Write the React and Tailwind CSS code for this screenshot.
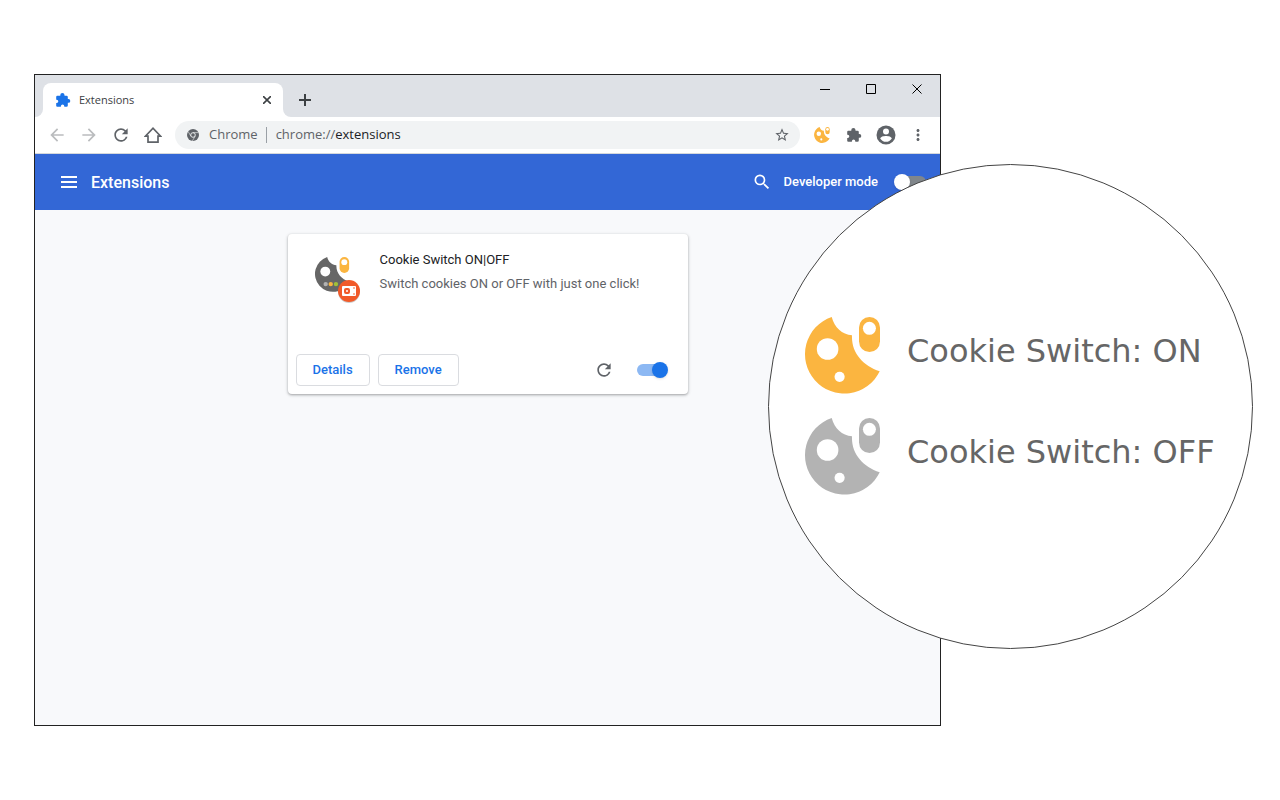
import {
  MdArrowBack,
  MdArrowForward,
  MdMoreVert,
  MdRefresh,
  MdSearch,
  MdStarBorder,
} from 'react-icons/md';

const COOKIE = 'M26.7 0A39.3 39.3 0 1 0 74.7 54.3C58 48.500 46.200 36 47 18.300C37 17.500 29.500 10.500 26.700 0Z';
const PILL = 'M64.500 0A10.500 10.500 0 0 1 75 10.500V24.500A10.500 10.500 0 0 1 54 24.500V10.500A10.500 10.500 0 0 1 64.500 0Z';

const CookieIcon = ({ className }) => (
  <svg className={className} viewBox="0 0 76 77" fill="currentColor" aria-hidden="true">
    <path d={COOKIE} />
    <path d={PILL} />
    <g fill="#fff">
      <circle cx="22.600" cy="32" r="10.800" />
      <circle cx="34.600" cy="59.800" r="5.100" />
      <circle cx="64.400" cy="11.300" r="6.500" />
    </g>
  </svg>
);

// Dark cookie with the "unpacked" badge in the corner
const ExtensionLogo = () => (
  <svg className="size-12 shrink-0" viewBox="0 0 48 48" aria-hidden="true">
    <g transform="translate(1 1) scale(.455)">
      <path d={COOKIE} fill="#666" />
      <path d={PILL} fill="#fbb540" />
      <circle cx="22.600" cy="32" r="10.800" fill="#fff" />
      <circle cx="64.400" cy="11.300" r="6.500" fill="#fff" />
      <circle cx="23.500" cy="59.500" r="4.800" fill="#b3b3b3" />
      <circle cx="34.600" cy="59.500" r="4.800" fill="#fbb540" />
      <circle cx="46" cy="59.500" r="4.800" fill="#a2c037" />
    </g>
    <circle cx="35" cy="36" r="11" fill="#000" opacity=".2" />
    <circle cx="35" cy="35" r="11" fill="#f15a29" />
    <rect x="28" y="30" width="14" height="10" rx="1" fill="#fff" />
    <rect x="30" y="32" width="6" height="6" rx="2" fill="#f15a29" />
    <circle cx="33" cy="35" r="1" fill="#fff" />
    <circle cx="40" cy="32" r=".8" fill="#f15a29" />
    <circle cx="40" cy="38" r=".8" fill="#f15a29" />
  </svg>
);

const PuzzleIcon = () => (
  <svg className="size-4" viewBox="0 0 16 16" fill="currentColor" aria-hidden="true">
    <path d="M2.300 3.800H5.300V3A2.100 2.100 0 0 1 9.500 3V3.800H11.500Q12.800 3.800 12.800 5V7H13.400A1.900 1.900 0 0 1 13.400 10.800H12.800V13.500Q12.800 14.800 11.500 14.800H9.300V14.200A1.700 1.700 0 0 0 5.900 14.200V14.800H2.300Q1.200 14.800 1.200 13.700V10.900H1.700A1.600 1.600 0 0 0 1.700 7.700H1.200V5Q1.200 3.800 2.300 3.800Z" />
  </svg>
);

const ProfileIcon = () => (
  <svg className="size-5" viewBox="0 0 20 20" aria-hidden="true">
    <circle cx="10" cy="10" r="9.500" fill="currentColor" />
    <circle cx="10" cy="6.400" r="3" fill="#fff" />
    <path d="M4.200 13.600C4.500 11.600 7.500 10.900 10 10.900S15.500 11.600 15.800 13.600A6.800 6.800 0 0 1 4.200 13.600Z" fill="#fff" />
  </svg>
);

const HomeIcon = () => (
  <svg className="size-[18px]" viewBox="0 0 18 18" fill="none" stroke="currentColor" strokeWidth="1.700" aria-hidden="true">
    <path d="M1.400 10.200H4V16.200H14V10.200H16.600L9 2.200Z" />
  </svg>
);

const ChromeIcon = () => (
  <svg className="size-3" viewBox="0 0 12 12" aria-hidden="true">
    <circle cx="6" cy="6" r="6" fill="#5f6368" />
    <circle cx="6" cy="6" r="2.300" fill="none" stroke="#f1f3f4" strokeWidth=".9" />
    <path d="M6 3.600H11.400M3.900 7.200L1.200 2.600M8.100 7.200L5.400 11.900" stroke="#f1f3f4" strokeWidth=".6" />
  </svg>
);

const WINDOW_BUTTONS = [
  { label: 'Minimize', d: 'M0 5.500H10' },
  { label: 'Maximize', d: 'M.5 .5H9.500V9.500H.5Z' },
  { label: 'Close', d: 'M.5 .5L9.500 9.500M9.500 .5L.5 9.500' },
];

const TabStrip = () => (
  <div className="flex h-[42px] items-end bg-[#dee1e6] pl-2">
    <div className="-ml-2 size-2 bg-white">
      <div className="size-2 rounded-br-lg bg-[#dee1e6]" />
    </div>
    <div className="flex h-[34px] w-60 items-center rounded-t-lg bg-white pl-3">
      <span className="text-[#1a73e8]"><PuzzleIcon /></span>
      <span className="ml-2 flex-1 font-['Open_Sans','Noto_Sans',sans-serif] text-[11px] text-[#3c4043]">Extensions</span>
      <button aria-label="Close tab" className="mr-2 grid size-4 place-items-center text-[#3c4043]">
        <svg className="size-2" viewBox="0 0 8 8" stroke="currentColor" strokeWidth="1.600">
          <path d="M0 0L8 8M8 0L0 8" />
        </svg>
      </button>
    </div>
    <div className="size-2 bg-white">
      <div className="size-2 rounded-bl-lg bg-[#dee1e6]" />
    </div>
    <button aria-label="New tab" className="grid h-[34px] w-7 place-items-center text-[#3c4043]">
      <svg className="size-3" viewBox="0 0 12 12" stroke="currentColor" strokeWidth="2">
        <path d="M6 0V12M0 6H12" />
      </svg>
    </button>
    <div className="ml-auto flex self-start">
      {WINDOW_BUTTONS.map((b) => (
        <button key={b.label} aria-label={b.label} className="grid h-7 w-[46px] place-items-center text-black">
          <svg className="size-[10px]" viewBox="0 0 10 10" fill="none" stroke="currentColor">
            <path d={b.d} />
          </svg>
        </button>
      ))}
    </div>
  </div>
);

const Toolbar = () => (
  <div className="flex h-[37px] items-center border-b border-[#d5d8dc] bg-white px-3 text-[#5f6368]">
    <div className="flex items-center gap-3">
      <button aria-label="Back" className="grid size-5 place-items-center text-[#babcbe]"><MdArrowBack className="size-5" /></button>
      <button aria-label="Forward" className="grid size-5 place-items-center text-[#babcbe]"><MdArrowForward className="size-5" /></button>
      <button aria-label="Reload" className="grid size-5 place-items-center"><MdRefresh className="size-5" /></button>
      <button aria-label="Home" className="grid size-5 place-items-center"><HomeIcon /></button>
    </div>
    <div className="ml-3 flex h-7 flex-1 items-center rounded-full bg-[#f1f3f4] pr-[10px] pl-3 font-['Open_Sans','Noto_Sans',sans-serif] text-[13px]">
      <ChromeIcon />
      <span className="ml-[10px]">Chrome</span>
      <span className="mx-2 h-4 w-px bg-[#9aa0a6]" />
      <label htmlFor="url" className="pl-px">chrome://</label>
      <input id="url" className="min-w-0 flex-1 bg-transparent text-[#202124] outline-none" defaultValue="extensions" />
      <button aria-label="Bookmark this page"><MdStarBorder className="size-4" /></button>
    </div>
    <div className="ml-3 flex items-center gap-3">
      <button aria-label="Cookie Switch" className="grid size-5 place-items-center text-[#fbb540]"><CookieIcon className="size-4" /></button>
      <button aria-label="Extensions menu" className="grid size-5 place-items-center"><PuzzleIcon /></button>
      <button aria-label="Profile" className="grid size-5 place-items-center"><ProfileIcon /></button>
      <button aria-label="More" className="grid size-5 place-items-center"><MdMoreVert className="size-[18px]" /></button>
    </div>
  </div>
);

const AppHeader = () => (
  <header className="flex h-14 items-center bg-[#3367d6] pr-[14px] pl-6 text-white">
    <button aria-label="Main menu" className="grid size-5 place-items-center">
      <svg className="h-3 w-4" viewBox="0 0 16 12" fill="currentColor">
        <path d="M0 0H16V2H0ZM0 5H16V7H0ZM0 10H16V12H0Z" />
      </svg>
    </button>
    <h1 className="ml-3 flex-1 pt-px text-base font-medium">Extensions</h1>
    <button aria-label="Search extensions"><MdSearch className="size-5" /></button>
    <label htmlFor="dev-mode" className="ml-3 text-[13px] font-medium">Developer mode</label>
    <input
      id="dev-mode"
      type="checkbox"
      className="ml-5 flex h-3 w-7 appearance-none items-center rounded-full bg-[#80868b] before:-ml-1 before:size-4 before:rounded-full before:bg-white before:shadow-sm"
    />
  </header>
);

const ExtensionCard = () => (
  <article className="flex h-40 w-[400px] flex-col justify-between rounded-sm bg-white shadow-[0_1px_2px_rgba(60,64,67,0.3),0_1px_3px_1px_rgba(60,64,67,0.15)]">
    <div className="flex pt-[22px] pl-[26px]">
      <ExtensionLogo />
      <div className="-mt-2 ml-[18px] text-[13px] leading-6">
        <h2 className="text-[#202124]">Cookie Switch ON|OFF</h2>
        <p className="text-[#5f6368]">Switch cookies ON or OFF with just one click!</p>
      </div>
    </div>
    <div className="flex items-center p-2 text-[13px] font-medium text-[#1a73e8]">
      <button className="h-8 rounded-sm border border-[#dadce0] px-4">Details</button>
      <button className="ml-2 h-8 rounded-sm border border-[#dadce0] px-4">Remove</button>
      <button aria-label="Reload extension" className="ml-auto text-[#5f6368]"><MdRefresh className="size-5" /></button>
      <input
        type="checkbox"
        defaultChecked
        aria-label="Enable Cookie Switch"
        className="mr-[15px] ml-[23px] flex h-3 w-7 appearance-none items-center rounded-full bg-[#8cb8f3] before:ml-[15px] before:size-4 before:shrink-0 before:rounded-full before:bg-[#1a73e8] before:shadow-sm"
      />
    </div>
  </article>
);

const Legend = () => (
  <aside className="absolute top-[164px] right-[27px] flex size-[485px] flex-col justify-center gap-6 rounded-full border border-[#444] bg-white pb-[2px] pl-9 font-['DejaVu_Sans',sans-serif] text-[32px] text-[#666]">
    <div className="flex items-center gap-[26px]">
      <CookieIcon className="h-[77px] w-[76px] text-[#fbb540]" />
      <p className="pb-2 whitespace-nowrap">Cookie Switch: ON</p>
    </div>
    <div className="flex items-center gap-[26px]">
      <CookieIcon className="h-[77px] w-[76px] text-[#b3b3b3]" />
      <p className="pb-2 whitespace-nowrap">Cookie Switch: OFF</p>
    </div>
  </aside>
);

export default function App() {
  return (
    <div className="relative flex min-h-screen bg-white py-[74px] pr-[339px] pl-[34px] font-['Roboto',sans-serif]">
      <div className="flex min-w-0 flex-1 flex-col border border-[#222]">
        <TabStrip />
        <Toolbar />
        <AppHeader />
        <main className="flex flex-1 items-start justify-center bg-[#f8f9fb] pt-6">
          <ExtensionCard />
        </main>
      </div>
      <Legend />
    </div>
  );
}
